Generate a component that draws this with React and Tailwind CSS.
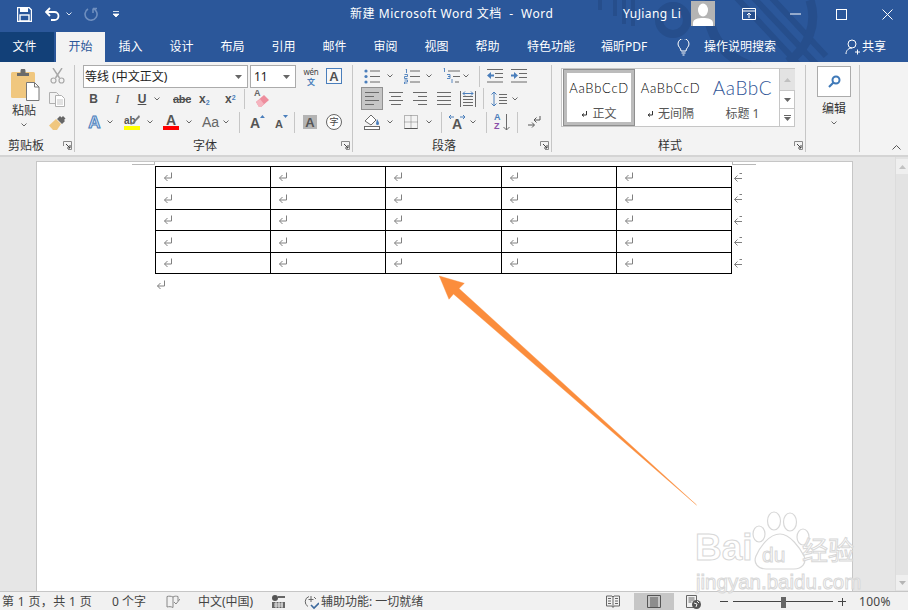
import React from "react";

const G = "#6a6a6a";
const B = "#4a7ebb";

function Chev({ c = "", color = "#666" }) {
  return (
    <svg width="6" height="4" viewBox="0 0 6 4" className={"shrink-0 " + c}>
      <path d="M.5.5 3 3 5.500.5" fill="none" stroke={color} strokeWidth="1" />
    </svg>
  );
}
function Sep({ c = "", h = "h-[21px]" }) {
  return <div className={"w-px shrink-0 bg-[#c6c6c6] " + h + " " + c} />;
}
function Launcher({ c = "" }) {
  return (
    <svg width="9" height="9" viewBox="0 0 9 9" className={"shrink-0 " + c}>
      <path d="M.5 5V.5h8v8H5" fill="none" stroke="#8a8a8a" />
      <path d="M3 3l4 4M7 4v3H4" fill="none" stroke="#444" />
    </svg>
  );
}
function Ret({ c = "", color = "#808080" }) {
  return (
    <svg width="10" height="10" viewBox="0 0 10 10" className={"shrink-0 " + c}>
      <path d="M8.500.5V6H1.500M4.500 3l-3 3 3 3" fill="none" stroke={color} strokeWidth="1" />
    </svg>
  );
}
function SmallRet() {
  return (
    <svg width="7" height="8" viewBox="0 0 7 8" className="shrink-0">
      <path d="M5.500 1v4H1.500M3 3.500 1 5l2 1.500" fill="none" stroke="#333" strokeWidth="1" />
    </svg>
  );
}
function RowEnd({ c = "" }) {
  return (
    <svg width="10" height="11" viewBox="0 0 10 11" className={"shrink-0 " + c}>
      <path d="M9 6.500H1.500M4.500 3.500l-3 3 3 3M6.500 1.500H9" fill="none" stroke="#808080" strokeWidth="1" />
    </svg>
  );
}
function Lines({ xs, w = 16, h = 14, color = G }) {
  return (
    <svg width={w} height={h} viewBox={`0 0 ${w} ${h}`} className="shrink-0">
      {xs.map((l, i) => (
        <path key={i} d={`M${l[0]} ${l[2] + 0.5}H${l[1]}`} stroke={color} strokeWidth="1" />
      ))}
    </svg>
  );
}

function Bullets() {
  return (
    <svg width="16" height="15" viewBox="0 0 16 15" className="shrink-0">
      {[2, 7.5, 13].map((y) => (
        <g key={y}>
          <circle cx="2" cy={y} r="1.600" fill={B} />
          <path d={`M6 ${y}h10`} stroke={G} />
        </g>
      ))}
    </svg>
  );
}
function Numbered() {
  return (
    <svg width="16" height="15" viewBox="0 0 16 15" className="shrink-0">
      {[2, 7.5, 13].map((y, i) => (
        <g key={y}>
          <path d={i === 0 ? `M1.500 ${y - 2}h1v4` : `M.5 ${y - 2}h3v2h-3v2h3`} fill="none" stroke={B} strokeWidth=".9" />
          <path d={`M6 ${y}h10`} stroke={G} />
        </g>
      ))}
    </svg>
  );
}
function Multi() {
  return (
    <svg width="18" height="16" viewBox="0 0 18 16" className="shrink-0">
      <path d="M1.500 0h1v4" fill="none" stroke={B} strokeWidth=".9" />
      <path d="M6 3h12M11 8.500h7M13 14h4" stroke={G} />
      <path d="M5 6.500h3v2H6h2v2H5M10 11v4" fill="none" stroke={B} strokeWidth=".9" />
    </svg>
  );
}
function Indent({ flip }) {
  return (
    <svg width="16" height="14" viewBox="0 0 16 14" className="shrink-0">
      <g stroke={G}>
        <path d="M0 .5h16M8 4.500h8M8 8.500h8M0 13h16" />
      </g>
      {flip ? (
        <path d="M0 5.500h3V3l4 3.500L3 10V7.500H0z" fill={B} />
      ) : (
        <path d="M7 5.500H4V3L0 6.500 4 10V7.500h3z" fill={B} />
      )}
    </svg>
  );
}
const lineSets = {
  left: [[0, 14, 0], [0, 9, 4], [0, 14, 8], [0, 9, 12]],
  center: [[1, 15, 0], [3, 13, 4], [1, 15, 8], [3, 13, 12]],
  right: [[1, 15, 0], [6, 15, 4], [1, 15, 8], [6, 15, 12]],
  just: [[1, 15, 0], [1, 15, 4], [1, 15, 8], [1, 15, 12]],
};
function Distribute() {
  return (
    <svg width="16" height="16" viewBox="0 0 16 16" className="shrink-0">
      <path d="M.5 0v16M15.500 0v16M3 5.500h10M3 8.500h10M3 11.500h10M3 14.500h10" stroke={G} />
      <path d="M3 2.500h10M5 .5 3 2.500l2 2M11 .5l2 2-2 2" fill="none" stroke={B} />
    </svg>
  );
}
function LineSpacing() {
  return (
    <svg width="16" height="16" viewBox="0 0 16 16" className="shrink-0">
      <path d="M3 1v14M.5 3.500 3 1l2.500 2.500M.5 12.500 3 15l2.500-2.500" fill="none" stroke={B} />
      <path d="M8 3.500h8M8 6.500h8M8 9.500h8M8 12.500h8" stroke={G} />
    </svg>
  );
}
function Shading() {
  return (
    <svg width="16" height="16" viewBox="0 0 16 16" className="shrink-0">
      <path d="M1 7l6-6 5 5-5 5z" fill="#fff" stroke={G} />
      <path d="M13 5c1 2 2 3 2 4.500a1.500 1.500 0 0 1-3 0z" fill={B} />
      <rect x=".5" y="12.500" width="15" height="3" fill="#fff" stroke={G} />
    </svg>
  );
}
function Borders() {
  return (
    <svg width="14" height="14" viewBox="0 0 14 14" className="shrink-0">
      <path d="M.5.5h13v13H.5zM7 .5v13M.5 7h13" fill="none" stroke="#777" strokeDasharray="1 1" />
      <path d="M.5 13.500h13" stroke="#555" />
    </svg>
  );
}
function TextDir() {
  return (
    <div className="relative w-[18px] h-[16px] shrink-0 flex justify-center items-end">
      <span className="font-bold text-[14px] leading-[12px] text-[#555] [font-family:'Liberation_Sans',sans-serif]">A</span>
      <svg width="18" height="6" viewBox="0 0 18 6" className="absolute top-0 left-0">
        <path d="M6 3H1M3 1 1 3l2 2M12 3h5M15 1l2 2-2 2" fill="none" stroke={B} />
      </svg>
    </div>
  );
}
function Sort() {
  return (
    <div className="flex w-[16px] items-center justify-between shrink-0">
      <div className="flex flex-col text-[9px] leading-[9px] font-bold [font-family:'Liberation_Sans',sans-serif]">
        <span className="text-[#4a7ebb]">A</span>
        <span className="text-[#8a4fa8]">Z</span>
      </div>
      <svg width="7" height="17" viewBox="0 0 7 17">
        <path d="M3.500 0v16M.5 13l3 3 3-3" fill="none" stroke={G} />
      </svg>
    </div>
  );
}
function Marks() {
  return (
    <svg width="16" height="14" viewBox="0 0 16 14" className="shrink-0">
      <path d="M13 1v4H7M9.500 2.500 7 5l2.500 2.500" fill="none" stroke="#555" />
      <path d="M1 10h6M5 7.500 7.500 10 5 12.500" fill="none" stroke="#555" />
    </svg>
  );
}

function Scissors() {
  return (
    <svg width="15" height="16" viewBox="0 0 15 16">
      <path d="M3 0l6.500 10M12 0 5.500 10" stroke="#a8a8a8" strokeWidth="1.400" fill="none" />
      <circle cx="3.500" cy="12.500" r="2.500" fill="none" stroke="#a8a8a8" strokeWidth="1.200" />
      <circle cx="11.500" cy="12.500" r="2.500" fill="none" stroke="#a8a8a8" strokeWidth="1.200" />
    </svg>
  );
}
function CopyIcon() {
  return (
    <svg width="16" height="15" viewBox="0 0 16 15">
      <path d="M.5.5h7l2 2v9H.5z" fill="#f3f3f3" stroke="#b0b0b0" />
      <path d="M6.500 3.500h6l3 3v8h-9z" fill="#fff" stroke="#b0b0b0" />
      <path d="M8 8h6M8 10h6M8 12h6" stroke="#c4c4c4" />
    </svg>
  );
}
function Brush() {
  return (
    <svg width="17" height="15" viewBox="0 0 17 15">
      <path d="M0 10.500 7 4l5 5-4 6H4z" fill="#f0c77f" />
      <path d="M8 4l3-3 1.500 1.500L14 1l2.500 2.500-1.500 1.500 1 1-3 3z" fill="#666" />
    </svg>
  );
}
function Paste() {
  return (
    <svg width="30" height="32" viewBox="0 0 30 32">
      <rect x="0" y="3" width="24" height="26" rx="1.500" fill="#f0c77f" />
      <path d="M6 7V4h3.500V2a2.500 2.500 0 0 1 5 0v2H18v3z" fill="#6b6b6b" />
      <path d="M15.500 13.500h8l4.500 4.500v13.500H15.500z" fill="#fff" stroke="#777" />
      <path d="M23.500 13.500V18H28" fill="none" stroke="#777" />
    </svg>
  );
}
function Eraser() {
  return (
    <div className="relative w-[16px] h-[18px] shrink-0">
      <span className="absolute left-0 top-[-3px] text-[9px] text-[#666] font-bold [font-family:'Liberation_Sans',sans-serif]">A</span>
      <svg width="16" height="18" viewBox="0 0 16 18" className="absolute left-0 top-0">
        <path d="M2 12 10 5l5 5-8 7H5z" fill="#ee8d9d" />
        <path d="M2 12l3 5h2l3-3-4-5z" fill="#f5b4bf" />
      </svg>
    </div>
  );
}
function Save() {
  return (
    <svg width="15" height="15" viewBox="0 0 15 15" className="shrink-0">
      <path d="M.5.500h11.500l2.500 2.500v11.500H.5z" fill="none" stroke="#fff" strokeWidth="1.400" />
      <rect x="3" y="1" width="8" height="4" fill="#fff" />
      <rect x="3" y="8" width="9" height="6" fill="none" stroke="#fff" strokeWidth="1.400" />
    </svg>
  );
}

const T = "[font-family:'Noto_Sans','Noto_Sans_CJK_SC',sans-serif]";
const SANS = "[font-family:'Liberation_Sans',sans-serif]";
const rows = ["h-[21px]", "h-[22px]", "h-[21px]", "h-[22px]", "h-[21px]"];
const cols = ["w-[115px]", "w-[115px]", "w-[116px]", "w-[115px]", "w-[115px]"];

function Pattern() {
  return (
    <svg width="908" height="62" viewBox="0 0 908 62" className="absolute left-0 top-0 pointer-events-none">
      <g fill="none" stroke="#264e8c">
        <circle cx="673" cy="20" r="14" strokeWidth="8" />
        <path d="M615 0v16M624 0v24M633 0v26M600 0v10" strokeWidth="4" />
        <path d="M710 0c-6 30 12 56 40 66" strokeWidth="10" />
        <path d="M735-4 800 66M752-4l66 70M770-4l56 60" strokeWidth="6" />
        <path d="M810 0c8 24-2 48-22 62" strokeWidth="9" />
      </g>
    </svg>
  );
}

function Title() {
  return (
    <div className="relative h-[32px] flex items-center text-white shrink-0 pb-[4px]">
      <div className="ml-[17px]"><Save /></div>
      <svg width="16" height="14" viewBox="0 0 16 14" className="ml-[13px] shrink-0">
        <path d="M1 5h8.500a4 4 0 0 1 0 8H6M5 1 1 5l4 4" fill="none" stroke="#fff" strokeWidth="1.800" />
      </svg>
      <Chev c="ml-[5px]" color="#dfe7f3" />
      <svg width="14" height="14" viewBox="0 0 14 14" className="ml-[12px] shrink-0">
        <path d="M9 1.500a6 6 0 1 1-5 .5M9 1.500V6M9 1.500H13" fill="none" stroke="#6f8fbf" strokeWidth="1.600" />
      </svg>
      <svg width="6" height="6" viewBox="0 0 6 6" className="ml-[15px] shrink-0">
        <path d="M0 .5h6M0 3h6L3 6z" stroke="#fff" fill="#fff" strokeWidth=".8" />
      </svg>
      <span className="ml-[231px] w-[204px] whitespace-nowrap text-[12px] leading-[16px] tracking-[0.55px]">新建 Microsoft Word 文档&nbsp; -&nbsp; Word</span>
      <span className="ml-[69px] w-[58px] whitespace-nowrap text-[12px] tracking-[0.4px]">YuJiang Li</span>
      <div className="ml-[10px] w-[24px] h-[25px] bg-[#b4b4b4] overflow-hidden shrink-0 mb-[1px]">
        <svg width="24" height="25" viewBox="0 0 24 25">
          <ellipse cx="12" cy="9" rx="5" ry="6.500" fill="#fff" />
          <path d="M2 25v-3c0-4 5-5 10-5s10 1 10 5v3z" fill="#fff" />
        </svg>
      </div>
      <svg width="14" height="12" viewBox="0 0 14 12" className="ml-[27px] shrink-0">
        <path d="M.5.500h13v11H.5zM.5 3h13M7 10V5M5 7l2-2 2 2" fill="none" stroke="#fff" />
      </svg>
      <svg width="11" height="2" viewBox="0 0 11 2" className="ml-[34px] shrink-0"><path d="M0 1h11" stroke="#fff" /></svg>
      <svg width="11" height="11" viewBox="0 0 11 11" className="ml-[35px] shrink-0"><rect x=".5" y=".5" width="10" height="10" fill="none" stroke="#fff" /></svg>
      <svg width="11" height="11" viewBox="0 0 11 11" className="ml-[35px] shrink-0"><path d="M.5.500l10 10M10.500.5l-10 10" stroke="#fff" /></svg>
    </div>
  );
}

function Tabs() {
  const names = ["插入", "设计", "布局", "引用", "邮件", "审阅", "视图", "帮助"];
  return (
    <div className="relative h-[30px] flex items-center text-white text-[12px] shrink-0">
      <div className="w-[54px] h-full bg-[#124078] flex items-center justify-center pr-[5px]">文件</div>
      <div className="ml-[2px] w-[49px] h-full bg-[#f3f3f3] text-[#2b579a] flex items-center justify-center">开始</div>
      {names.map((n) => (
        <div key={n} className="w-[51px] text-center">{n}</div>
      ))}
      <div className="ml-[12px] w-[52px] text-center">特色功能</div>
      <div className="ml-[24px] w-[49px] whitespace-nowrap">福昕PDF</div>
      <svg width="13" height="17" viewBox="0 0 13 17" className="ml-[27px] shrink-0">
        <path d="M4 12c0-3-3-4-3-7a5.500 5.500 0 0 1 11 0c0 3-3 4-3 7zM4.500 14h4M5.500 16h2" fill="none" stroke="#fff" />
      </svg>
      <span className="ml-[14px] whitespace-nowrap">操作说明搜索</span>
      <svg width="16" height="16" viewBox="0 0 16 16" className="ml-[69px] shrink-0">
        <circle cx="7" cy="5" r="4" fill="none" stroke="#fff" />
        <path d="M1 15c0-4 3-6 6-6M10 13h5M12.500 10.500v5" fill="none" stroke="#fff" />
      </svg>
      <span className="ml-[1px] whitespace-nowrap">共享</span>
    </div>
  );
}

function GroupFoot({ label, lc, fc }) {
  return (
    <div className="h-[15px] pt-[2px] flex items-center text-[12px] text-[#333] leading-[13px]">
      <span className={"text-center shrink-0 " + lc}>{label}</span>
      <Launcher c={fc} />
    </div>
  );
}

function Clipboard() {
  return (
    <div className="w-[75px] h-[87px] border-r border-[#c6c6c6] shrink-0 flex flex-col">
      <div className="h-[72px] flex">
        <div className="w-[47px] flex flex-col items-center pl-[1px]">
          <div className="ml-[4px] mt-[4px] h-[32px]"><Paste /></div>
          <span className="mt-[1px] text-[12px] leading-[18px] text-[#333]">粘贴</span>
          <Chev c="mt-[3px]" />
        </div>
        <div className="w-[18px] flex flex-col items-center pt-[3px] gap-[8px] ml-[1px]">
          <Scissors />
          <CopyIcon />
          <Brush />
        </div>
      </div>
      <GroupFoot label="剪贴板" lc="w-[52px]" fc="ml-[11px]" />
    </div>
  );
}

function Font() {
  const gl = "text-[#505050] " + SANS;
  return (
    <div className="w-[278px] h-[87px] border-r border-[#c6c6c6] shrink-0 flex flex-col">
      <div className="h-[72px] flex flex-col">
        <div className="h-[24px] flex items-start">
          <div className="ml-[8px] w-[165px] h-[23px] bg-white border border-[#ababab] flex items-center pl-[1px] pr-[5px] text-[12px] text-[#222]">
            <span className="flex-1 whitespace-nowrap">等线 (中文正文)</span>
            <svg width="7" height="4" viewBox="0 0 7 4"><path d="M0 0h7L3.500 4z" fill="#666" /></svg>
          </div>
          <div className="ml-[2px] w-[46px] h-[23px] bg-white border border-[#ababab] flex items-center pl-[3px] pr-[5px] text-[12px] text-[#222]">
            <span className="flex-1">11</span>
            <svg width="7" height="4" viewBox="0 0 7 4"><path d="M0 0h7L3.500 4z" fill="#666" /></svg>
          </div>
          <div className="ml-[7px] w-[16px] h-[22px] flex flex-col items-center pt-[2px] shrink-0">
            <span className="text-[8px] leading-[10px] text-[#444] whitespace-nowrap tracking-[-0.2px]">wén</span>
            <span className="text-[8px] leading-[10px] text-[#4a7ebb] font-bold">文</span>
          </div>
          <div className="ml-[7px] mt-[3px] w-[16px] h-[16px] border border-[#4a7ebb] flex items-center justify-center text-[13px] font-bold leading-none shrink-0 bg-[#f8f8f8]">
            <span className={gl}>A</span>
          </div>
        </div>
        <div className="h-[20px] flex items-center text-[12px] font-bold">
          <span className={"ml-[14px] w-[9px] text-center " + gl}>B</span>
          <span className="ml-[15px] w-[9px] text-center italic font-normal [font-family:'Liberation_Serif',serif] text-[#555] text-[13px]">I</span>
          <span className={"ml-[15px] w-[10px] text-center underline " + gl}>U</span>
          <Chev c="ml-[7px]" />
          <span className={"ml-[13px] w-[16px] text-[11px] line-through whitespace-nowrap tracking-[-0.3px] " + gl}>abc</span>
          <span className={"ml-[10px] w-[14px] whitespace-nowrap " + gl}>x<sub className="text-[7px] text-[#4a7ebb]">2</sub></span>
          <span className={"ml-[12px] w-[14px] whitespace-nowrap " + gl}>x<sup className="text-[7px] text-[#4a7ebb]">2</sup></span>
          <Sep c="ml-[5px]" h="h-[20px]" />
          <div className="ml-[9px]"><Eraser /></div>
        </div>
        <div className="h-[26px] flex items-center">
          <span className={"ml-[12px] w-[15px] text-center text-[17px] font-bold leading-none text-[#cfe0f5] [-webkit-text-stroke:1px_#4a7ebb] " + SANS}>A</span>
          <Chev c="ml-[5px]" />
          <div className="ml-[11px] w-[16px] flex flex-col items-center shrink-0">
            <div className="relative w-[16px] h-[11px]">
              <span className={"absolute left-0 top-[-2px] text-[10px] font-bold text-[#555] " + SANS}>ab</span>
              <svg width="16" height="12" viewBox="0 0 16 12" className="absolute left-0 top-0"><path d="M15 0l-7 8-2 2 3-1 7-7z" fill="#777" /></svg>
            </div>
            <div className="w-[16px] h-[4px] bg-[#ffff00]" />
          </div>
          <Chev c="ml-[7px]" />
          <div className="ml-[10px] w-[16px] flex flex-col items-center shrink-0">
            <span className={"text-[14px] leading-[11px] font-bold text-[#555] " + SANS}>A</span>
            <div className="w-[16px] h-[4px] bg-[#ff0000]" />
          </div>
          <Chev c="ml-[7px]" />
          <span className={"ml-[10px] w-[16px] text-[14px] whitespace-nowrap text-[#666] " + SANS}>Aa</span>
          <Chev c="ml-[5px]" />
          <Sep c="ml-[10px]" />
          <div className="ml-[10px] w-[15px] h-[16px] flex items-end">
            <span className={"text-[14px] leading-[14px] font-bold text-[#555] " + SANS}>A</span>
            <svg width="5" height="3" viewBox="0 0 5 3" className="mb-[12px]"><path d="M0 3h5L2.500 0z" fill="#4a7ebb" /></svg>
          </div>
          <div className="ml-[10px] w-[14px] h-[16px] flex items-end">
            <span className={"text-[11px] leading-[12px] font-bold text-[#555] " + SANS}>A</span>
            <svg width="5" height="3" viewBox="0 0 5 3" className="mb-[12px]"><path d="M0 0h5L2.500 3z" fill="#4a7ebb" /></svg>
          </div>
          <Sep c="ml-[5px]" />
          <div className="ml-[8px] w-[14px] h-[14px] bg-[#b4b4b4] flex items-center justify-center shrink-0">
            <span className={"text-[13px] font-bold leading-none text-[#555] " + SANS}>A</span>
          </div>
          <div className="ml-[9px] w-[16px] h-[16px] rounded-full border border-[#666] flex items-center justify-center text-[9px] text-[#444] bg-white shrink-0">字</div>
        </div>
      </div>
      <GroupFoot label="字体" lc="ml-[30px] w-[200px]" fc="ml-[36px]" />
    </div>
  );
}

function Paragraph() {
  return (
    <div className="w-[199px] h-[87px] border-r border-[#c6c6c6] shrink-0 flex flex-col">
      <div className="h-[72px] flex flex-col">
        <div className="h-[22px] flex items-center">
          <div className="ml-[11px]"><Bullets /></div>
          <Chev c="ml-[7px]" />
          <div className="ml-[11px]"><Numbered /></div>
          <Chev c="ml-[6px]" />
          <div className="ml-[10px]"><Multi /></div>
          <Chev c="ml-[3px]" />
          <Sep c="ml-[10px]" />
          <div className="ml-[7px]"><Indent /></div>
          <div className="ml-[8px]"><Indent flip /></div>
        </div>
        <div className="h-[23px] flex items-center">
          <div className="ml-[8px] w-[22px] h-[23px] bg-[#c6c6c6] border border-[#919191] flex items-center justify-center shrink-0">
            <Lines xs={lineSets.left} h={13} w={14} />
          </div>
          <div className="ml-[5px]"><Lines xs={lineSets.center} h={13} /></div>
          <div className="ml-[8px]"><Lines xs={lineSets.right} h={13} /></div>
          <div className="ml-[8px]"><Lines xs={lineSets.just} h={13} /></div>
          <div className="ml-[8px]"><Distribute /></div>
          <Sep c="ml-[7px]" />
          <div className="ml-[7px]"><LineSpacing /></div>
          <Chev c="ml-[5px]" />
        </div>
        <div className="h-[24px] flex items-center">
          <div className="ml-[11px]"><Shading /></div>
          <Chev c="ml-[7px]" />
          <div className="ml-[11px]"><Borders /></div>
          <Chev c="ml-[8px]" />
          <Sep c="ml-[9px]" />
          <div className="ml-[6px]"><TextDir /></div>
          <Chev c="ml-[4px]" />
          <Sep c="ml-[10px]" />
          <div className="ml-[7px]"><Sort /></div>
          <Sep c="ml-[7px]" />
          <div className="ml-[9px]"><Marks /></div>
        </div>
      </div>
      <GroupFoot label="段落" lc="ml-[11px] w-[160px]" fc="ml-[16px]" />
    </div>
  );
}

function Styles() {
  const sample = "text-[13px] leading-[18px] text-black whitespace-nowrap tracking-[0.75px] font-light [font-family:'Lato',sans-serif]";
  const cap = "flex items-center gap-[4px] text-[12px] leading-[16px] text-[#555] whitespace-nowrap";
  return (
    <div className="w-[254px] h-[87px] border-r border-[#c6c6c6] shrink-0 flex flex-col">
      <div className="h-[72px] pt-[3px]">
        <div className="ml-[9px] w-[234px] h-[59px] bg-white border border-[#c6c6c6] flex pl-[1px]">
          <div className="w-[72px] h-[57px] border-[4px] border-[#bcbcbc] outline outline-[1px] outline-[#8f8f8f] outline-offset-[-1px] flex flex-col items-center pt-[6px] gap-[9px] shrink-0">
            <span className={sample}>AaBbCcD</span>
            <span className={cap}><SmallRet /><span>正文</span></span>
          </div>
          <div className="w-[71px] flex flex-col items-center pt-[10px] gap-[9px] shrink-0">
            <span className={sample}>AaBbCcD</span>
            <span className={cap}><SmallRet /><span>无间隔</span></span>
          </div>
          <div className="w-[73px] flex flex-col items-center pt-[7px] gap-[6px] shrink-0">
            <span className="text-[19px] leading-[24px] text-[#2f5496] whitespace-nowrap tracking-[0.6px] font-light [font-family:'Lato',sans-serif]">AaBbC</span>
            <span className={cap}>标题 1</span>
          </div>
          <div className="w-[16px] flex flex-col border-l border-[#c6c6c6] shrink-0">
            <div className="h-[21px] bg-[#e3e3e3] flex items-center justify-center">
              <svg width="7" height="4" viewBox="0 0 7 4"><path d="M0 4h7L3.500 0z" fill="#c0c0c0" /></svg>
            </div>
            <div className="h-[19px] border-y border-[#c6c6c6] flex items-center justify-center">
              <svg width="7" height="4" viewBox="0 0 7 4"><path d="M0 0h7L3.500 4z" fill="#666" /></svg>
            </div>
            <div className="flex-1 flex flex-col items-center justify-center gap-[1px]">
              <div className="w-[7px] h-px bg-[#666]" />
              <svg width="7" height="4" viewBox="0 0 7 4"><path d="M0 0h7L3.500 4z" fill="#666" /></svg>
            </div>
          </div>
        </div>
      </div>
      <GroupFoot label="样式" lc="ml-[18px] w-[200px]" fc="ml-[24px]" />
    </div>
  );
}

function Editing() {
  return (
    <div className="w-[54px] h-[87px] border-r border-[#c6c6c6] shrink-0 flex flex-col items-start pl-[11px] pt-[1px]">
      <div className="w-[34px] h-[31px] bg-white border border-[#ababab] flex items-center justify-center">
        <svg width="13" height="13" viewBox="0 0 13 13">
          <circle cx="8" cy="5" r="3.500" fill="none" stroke="#3f79b8" strokeWidth="2" />
          <path d="M5.500 7.500 1 12" stroke="#3f79b8" strokeWidth="2.200" />
        </svg>
      </div>
      <span className="w-[34px] mt-[3px] text-center text-[12px] leading-[18px] text-[#333]">编辑</span>
      <div className="w-[34px] flex justify-center mt-[3px]"><Chev /></div>
    </div>
  );
}

function Ribbon() {
  return (
    <div className="h-[95px] pt-[3px] bg-[#f3f3f3] border-b-2 border-[#d4d4d4] flex shrink-0">
      <Clipboard />
      <Font />
      <Paragraph />
      <Styles />
      <Editing />
      <div className="flex-1 flex items-end justify-end pr-[7px] pb-[2px] h-[87px]">
        <svg width="9" height="5" viewBox="0 0 9 5"><path d="M.5 4.500l4-4 4 4" fill="none" stroke="#555" /></svg>
      </div>
    </div>
  );
}

function Doc() {
  return (
    <div className="flex-1 flex bg-[#e6e6e6] min-h-0 overflow-hidden">
      <div className="w-[895px] pt-[4px] pl-[36px] shrink-0">
        <div className="relative w-[817px] h-[500px] bg-white border border-[#c6c6c6] pt-[4px] pl-[118px]">
          <div className="absolute left-[95px] top-0 w-[23px] h-[3px] border-b border-r border-[#b8b8b8]" />
          <div className="absolute left-[695px] top-0 w-[24px] h-[3px] border-b border-l border-[#b8b8b8]" />
          <div className="w-[577px]">
            <div className="border-t border-l border-black">
              {rows.map((r, i) => (
                <div key={i} className={"flex " + r}>
                  {cols.map((c, j) => (
                    <div key={j} className={"flex items-center shrink-0 pl-[7px] border-r border-b border-black " + c}>
                      <Ret />
                    </div>
                  ))}
                  <RowEnd c="ml-[1px] mt-[5px]" />
                </div>
              ))}
            </div>
            <Ret c="mt-[6px] ml-[1px]" />
          </div>
        </div>
      </div>
      <div className="w-[13px] bg-[#e3e3e3] border-l border-[#dcdcdc] flex flex-col pt-[2px] shrink-0">
        <div className="h-[15px] bg-[#efefef] flex items-center justify-center">
          <svg width="7" height="4" viewBox="0 0 7 4"><path d="M0 4h7L3.500 0z" fill="#c2c2c2" /></svg>
        </div>
        <div className="flex-1" />
        <div className="h-[15px] mb-[1px] bg-[#efefef] flex items-center justify-center">
          <svg width="7" height="4" viewBox="0 0 7 4"><path d="M0 0h7L3.500 4z" fill="#b5b5b5" /></svg>
        </div>
      </div>
    </div>
  );
}

function Status() {
  return (
    <div className="h-[19px] pt-[1px] bg-[#f1f1f1] border-t border-[#c6c6c6] flex items-center text-[12px] text-[#444] shrink-0">
      <span className="ml-[2px] w-[92px] whitespace-nowrap tracking-[0.35px]">第 1 页，共 1 页</span>
      <span className="ml-[18px] w-[36px] whitespace-nowrap">0 个字</span>
      <svg width="14" height="14" viewBox="0 0 14 14" className="ml-[18px] shrink-0">
        <path d="M7 2C5 1 3 1 1 1.500V12c2-.5 4-.5 6 .5V2zM7 2c1.500-1 3-1 5-.5V6M8 7l2 2 4-5" fill="none" stroke="#888" />
      </svg>
      <span className="ml-[18px] w-[56px] whitespace-nowrap">中文(中国)</span>
      <svg width="14" height="13" viewBox="0 0 14 13" className="ml-[18px] shrink-0">
        <circle cx="3" cy="3" r="3" fill="#555" />
        <path d="M6 1h7v2H6zM0 7h13v6H0z" fill="#666" />
        <path d="M2 9h9M2 11h9M4 7v6M7 7v6M10 7v6" stroke="#fff" strokeWidth=".8" />
      </svg>
      <svg width="16" height="16" viewBox="0 0 16 16" className="ml-[17px] shrink-0">
        <path d="M6 2.500a5.500 5.500 0 0 0-1 10M8 2v6M5.500 5.500h5M11 3l2 2" fill="none" stroke="#666" />
        <path d="M8 11l3 3 5-5" fill="none" stroke="#3d6a9e" strokeWidth="1.600" />
      </svg>
      <span className="ml-[2px] w-[104px] whitespace-nowrap">辅助功能: 一切就绪</span>
      <svg width="14" height="13" viewBox="0 0 14 13" className="ml-[181px] shrink-0">
        <path d="M.5 1h5.500L7 2l1-1h5.500v10H8l-1 1.500L6 11H.5zM7 2v9M2 3.500h3M2 6h3M2 8.500h3M9 3.500h3M9 6h3M9 8.500h3" fill="none" stroke="#666" />
      </svg>
      <div className="ml-[14px] w-[40px] h-[18px] bg-[#c6c6c6] flex items-center justify-center shrink-0">
        <svg width="14" height="13" viewBox="0 0 14 13">
          <path d="M.5.500h13v12H.5zM3 3h8M3 5h8M3 7h8M3 9h8M3 11h8" fill="none" stroke="#555" />
        </svg>
      </div>
      <svg width="15" height="14" viewBox="0 0 15 14" className="ml-[12px] shrink-0">
        <path d="M9 12.500H.5V.5h10V6M2.500 3h6M2.500 5h6M2.500 7h3" fill="none" stroke="#666" />
        <circle cx="10.500" cy="9.500" r="4.500" fill="#555" />
        <path d="M8 8l3 1-1 3M11 6l2 2" stroke="#f1f1f1" fill="none" />
      </svg>
      <div className="ml-[19px] w-[8px] h-px bg-[#444] shrink-0" />
      <div className="ml-[5px] w-[100px] h-[12px] flex items-center relative shrink-0">
        <div className="w-full h-px bg-[#444]" />
        <div className="absolute left-[48px] top-[1px] w-[5px] h-[11px] bg-[#666]" />
      </div>
      <span className="ml-[5px] w-[8px] h-[8px] relative shrink-0">
        <span className="absolute left-0 top-[3.500px] w-[8px] h-px bg-[#444]" />
        <span className="absolute top-0 left-[3.500px] w-px h-[8px] bg-[#444]" />
      </span>
      <span className="ml-[13px] whitespace-nowrap tracking-[0.3px]">100%</span>
    </div>
  );
}

function Overlay() {
  const stroke = "text-white/60 [-webkit-text-stroke:1px_#d8d8d8] whitespace-nowrap absolute " + SANS;
  return (
    <>
      <svg width="908" height="610" viewBox="0 0 908 610" className="absolute left-0 top-0 pointer-events-none">
        <polygon points="439.300,276 464.300,283.300 459,288.500 696.500,505 453.500,294 449,299.300" fill="#fb8d3c" stroke="#fb8d3c" strokeWidth=".4" />
      </svg>
      <div className="absolute left-[695px] top-[510px] w-[170px] h-[85px] pointer-events-none">
        <svg width="170" height="85" viewBox="0 0 170 85" className="absolute left-0 top-0">
          <g fill="#ffffff" fillOpacity=".55" stroke="#d8d8d8" strokeWidth="1.200">
            <ellipse cx="64" cy="24" rx="6" ry="8" />
            <ellipse cx="79" cy="11" rx="6.500" ry="9" />
            <ellipse cx="95" cy="12" rx="6.500" ry="9" />
            <ellipse cx="108" cy="27" rx="6" ry="8" />
            <path d="M85 24c10 0 20 14 24 22 3 7-2 13-10 13H71c-8 0-13-6-10-13 4-9 13-22 24-22z" />
          </g>
        </svg>
        <span className={stroke + " left-0 top-[17px] text-[37px] font-bold leading-[42px]"}>Bai</span>
        <span className={stroke + " left-[67px] top-[33px] text-[21px] leading-[24px]"}>du</span>
        <span className={stroke + " left-[107px] top-[22px] text-[26px] leading-[34px] [font-family:'Noto_Sans_CJK_SC',sans-serif]"}>经验</span>
        <span className={stroke + " left-[1px] top-[60px] text-[20.5px] leading-[24px]"}>jingyan.baidu.com</span>
      </div>
    </>
  );
}

export default function App() {
  return (
    <div className={"relative w-[908px] h-[610px] overflow-hidden flex flex-col bg-[#e6e6e6] " + T}>
      <div className="relative bg-[#2b579a] shrink-0">
        <Pattern />
        <Title />
        <Tabs />
      </div>
      <Ribbon />
      <Doc />
      <Status />
      <Overlay />
    </div>
  );
}
